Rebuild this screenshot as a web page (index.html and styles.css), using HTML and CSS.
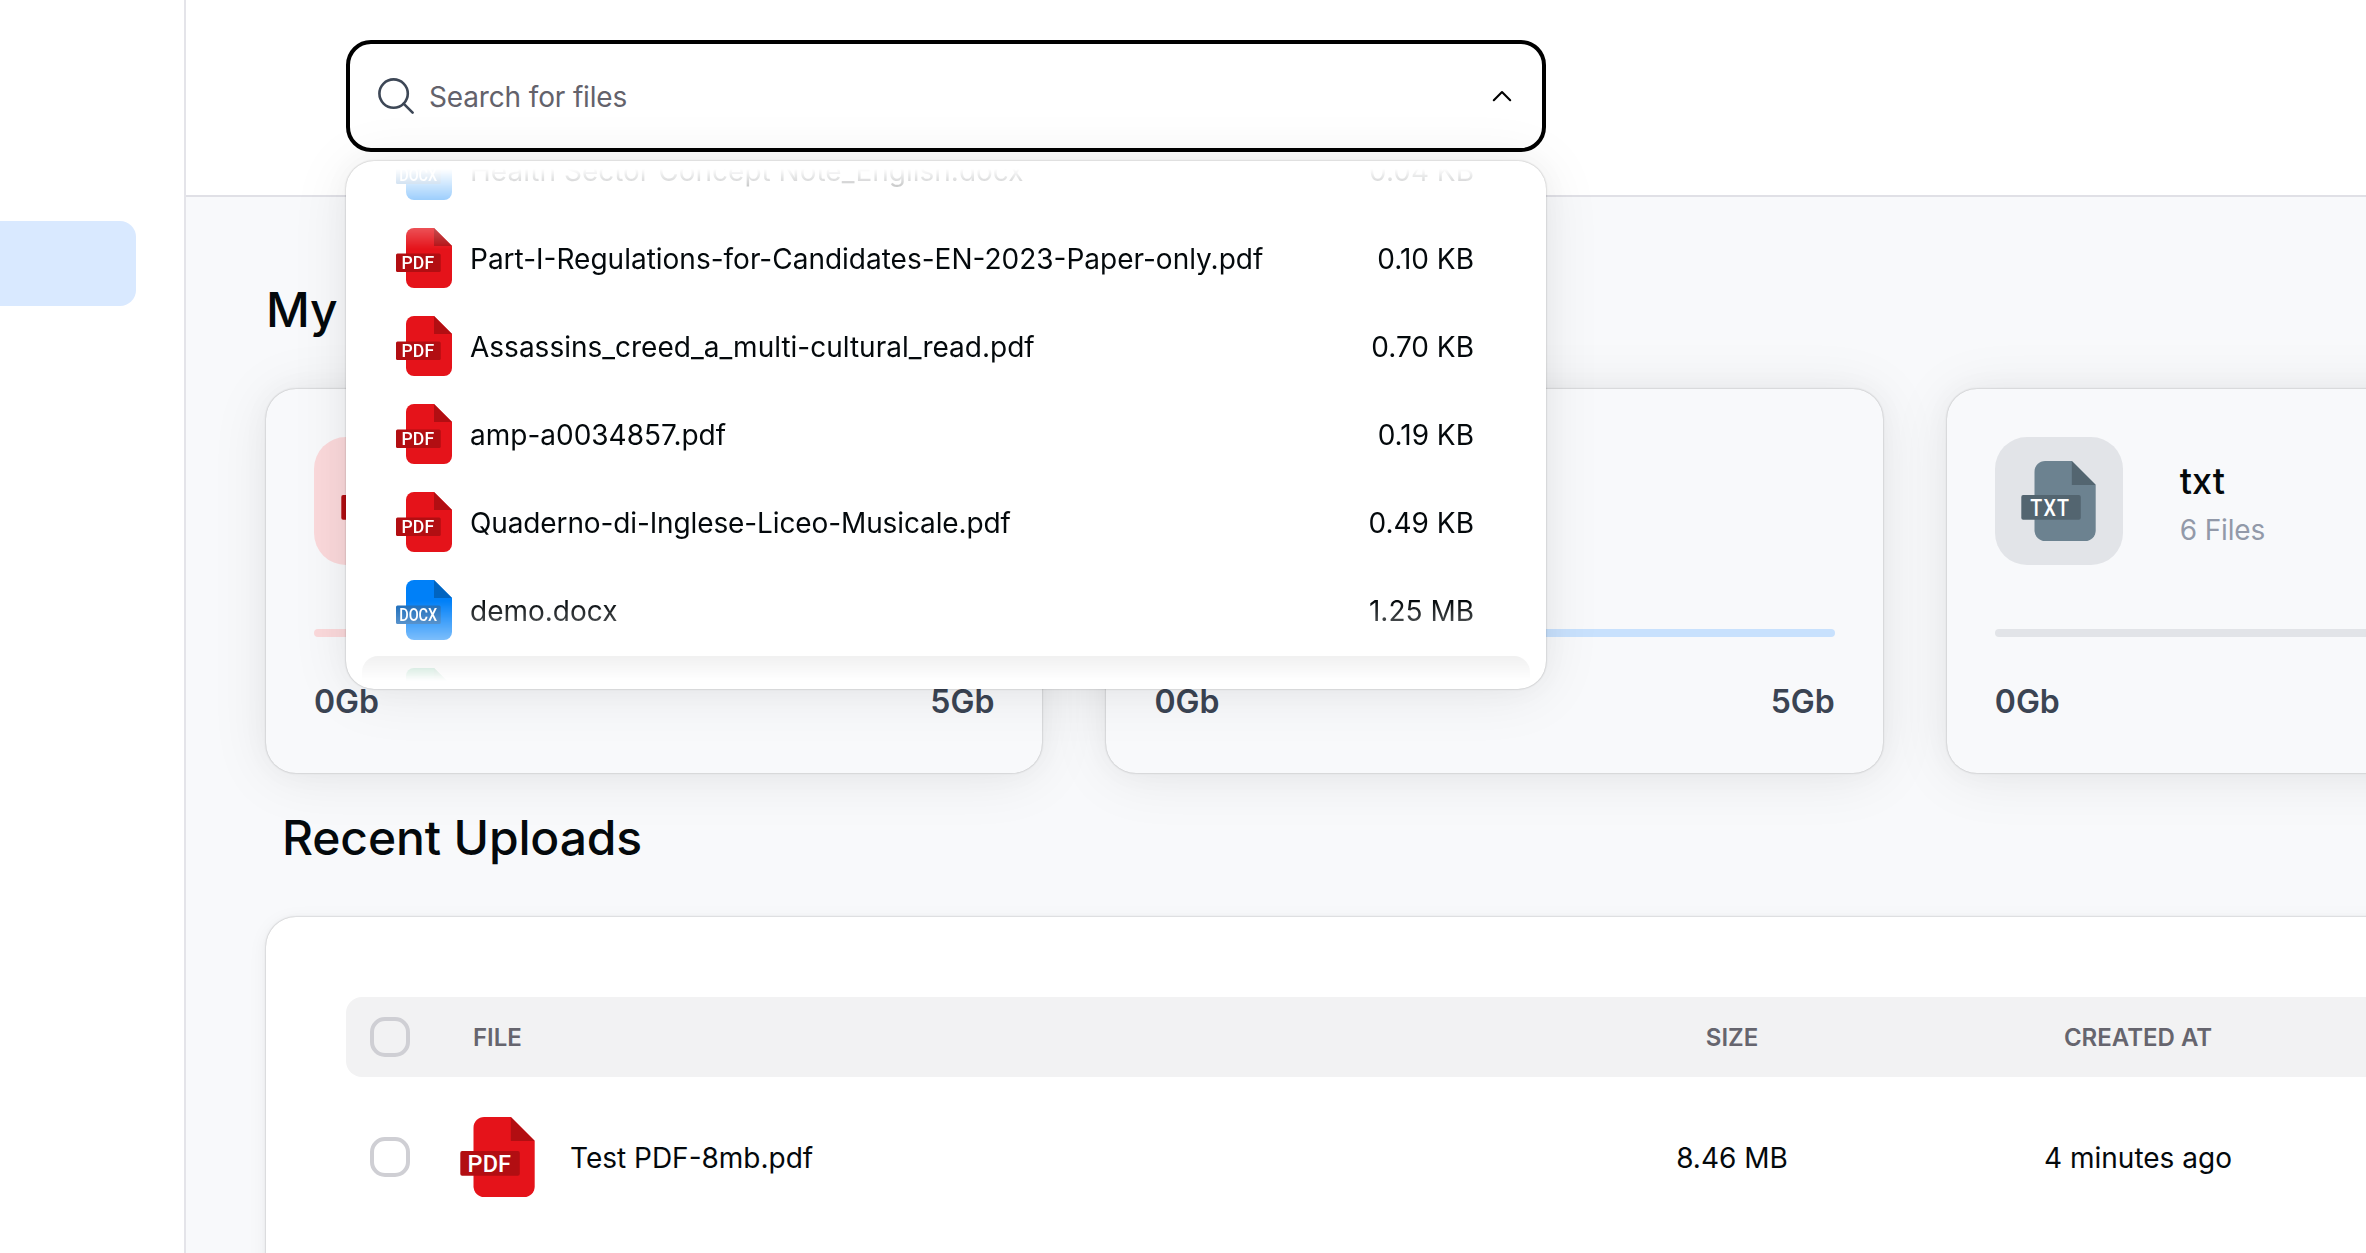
FILE: index.html
```html
<!DOCTYPE html>
<html lang="en">
<head>
<meta charset="utf-8">
<title>Files</title>
<link rel="stylesheet" href="styles.css">
</head>
<body>
<svg class="defs" aria-hidden="true">
  <symbol id="page" viewBox="0 0 56 60">
    <path class="sheet" d="M18 0H38L56 18V52a8 8 0 0 1-8 8H18a8 8 0 0 1-8-8V8a8 8 0 0 1 8-8Z"/>
    <path class="fold" d="M38 0L56 18H38Z"/>
    <rect class="band" x="0" y="25.5" width="44.7" height="18.6" rx="1.5"/>
  </symbol>
</svg>
<div class="app">
  <aside class="sidebar"><div class="nav-active"></div></aside>
  <div class="content">
    <header class="topbar">
      <div class="search">
        <div class="search-field">
          <svg class="search-icon" viewBox="0 0 36 36"><circle cx="15.6" cy="15.6" r="14.2"/><path d="M25.6 25.6L34.6 34.6"/></svg>
          <span class="placeholder">Search for files</span>
          <svg class="chevron" viewBox="0 0 20 12"><path d="M1.8 10.2L10 2L18.2 10.2"/></svg>
        </div>
        <div class="dropdown">
          <ul class="results">
            <li class="result"><svg class="file-icon blue" viewBox="0 0 56 60"><use href="#page"/><text class="ext docx" x="3.2" y="41.2" textLength="38" lengthAdjust="spacingAndGlyphs">DOCX</text></svg><span class="name">Health Sector Concept Note_English.docx</span><span>0.04 KB</span></li>
            <li class="result"><svg class="file-icon red" viewBox="0 0 56 60"><use href="#page"/><text class="ext" x="5.6" y="41.2" textLength="32.5" lengthAdjust="spacing">PDF</text></svg><span class="name">Part-I-Regulations-for-Candidates-EN-2023-Paper-only.pdf</span><span>0.10 KB</span></li>
            <li class="result"><svg class="file-icon red" viewBox="0 0 56 60"><use href="#page"/><text class="ext" x="5.6" y="41.2" textLength="32.5" lengthAdjust="spacing">PDF</text></svg><span class="name">Assassins_creed_a_multi-cultural_read.pdf</span><span>0.70 KB</span></li>
            <li class="result"><svg class="file-icon red" viewBox="0 0 56 60"><use href="#page"/><text class="ext" x="5.6" y="41.2" textLength="32.5" lengthAdjust="spacing">PDF</text></svg><span class="name">amp-a0034857.pdf</span><span>0.19 KB</span></li>
            <li class="result"><svg class="file-icon red" viewBox="0 0 56 60"><use href="#page"/><text class="ext" x="5.6" y="41.2" textLength="32.5" lengthAdjust="spacing">PDF</text></svg><span class="name tight">Quaderno-di-Inglese-Liceo-Musicale.pdf</span><span>0.49 KB</span></li>
            <li class="result"><svg class="file-icon blue" viewBox="0 0 56 60"><use href="#page"/><text class="ext docx" x="3.2" y="41.2" textLength="38" lengthAdjust="spacingAndGlyphs">DOCX</text></svg><span class="name">demo.docx</span><span>1.25 MB</span></li>
            <li class="result hovered"><svg class="file-icon green" viewBox="0 0 56 60"><use href="#page"/></svg></li>
          </ul>
        </div>
      </div>
    </header>
    <main class="main">
      <h1 class="title">My</h1>
      <div class="cards">
        <section class="card tone-red">
          <div class="card-head"><div class="tile"><svg class="file-icon large red" viewBox="0 0 56 60"><use href="#page"/></svg></div></div>
          <div class="bar"></div>
          <div class="range"><span>0Gb</span><span>5Gb</span></div>
        </section>
        <section class="card tone-blue">
          <div class="card-head"><div class="tile"><svg class="file-icon large blue" viewBox="0 0 56 60"><use href="#page"/></svg></div></div>
          <div class="bar"></div>
          <div class="range"><span>0Gb</span><span>5Gb</span></div>
        </section>
        <section class="card tone-gray">
          <div class="card-head">
            <div class="tile"><svg class="file-icon large slate" viewBox="0 0 56 60"><use href="#page"/><text class="ext" x="6.9" y="41" textLength="29" lengthAdjust="spacingAndGlyphs"><tspan>T</tspan><tspan dx="1">X</tspan><tspan dx="1">T</tspan></text></svg></div>
            <div><div class="kind">txt</div><div class="count">6 Files</div></div>
          </div>
          <div class="bar"></div>
          <div class="range"><span>0Gb</span></div>
        </section>
      </div>
      <h2 class="title recent">Recent Uploads</h2>
      <section class="table">
        <div class="row head"><span class="check"></span><span class="col-file">FILE</span><span class="mid">SIZE</span><span class="mid">CREATED AT</span></div>
        <div class="row"><span class="check"></span><span class="file"><svg class="file-icon large red" viewBox="0 0 56 60"><use href="#page"/><text class="ext" x="5.6" y="41.2" textLength="32.5" lengthAdjust="spacing">PDF</text></svg><span class="cell">Test PDF-8mb.pdf</span></span><span class="mid cell">8.46 MB</span><span class="mid cell">4 minutes ago</span></div>
      </section>
    </main>
  </div>
</div>
</body>
</html>
```
FILE: styles.css
```css
* { box-sizing: border-box; }
body {
  margin: 0;
  font-family: Inter, "Liberation Sans", sans-serif;
  font-size: 28px;
  font-weight: 420;
  color: #04090c;
  background: #fff;
}
.defs { position: absolute; width: 0; height: 0; }
.app { display: flex; width: 100%; height: 1253px; overflow: hidden; }
.sidebar { flex: none; width: 186px; padding-top: 221px; border-right: 2px solid #e4e4e9; }
.nav-active { width: 136px; height: 85px; border-radius: 0 16px 16px 0; background: #d9e9ff; }
.content { flex: 1; min-width: 0; display: flex; flex-direction: column; }
.topbar { flex: none; height: 197px; padding: 40px 0 0 160px; border-bottom: 2px solid #e0e0e6; }

.search { position: relative; z-index: 2; width: 1200px; }
.search-field {
  display: flex;
  align-items: center;
  height: 112px;
  padding: 0 30px 0 28px;
  border: 4px solid #000;
  border-radius: 25px;
}
.search-icon { width: 36px; height: 36px; fill: none; stroke: #3d4756; stroke-width: 2.6; stroke-linecap: round; }
.placeholder { flex: 1; margin-left: 15px; padding-top: 1px; color: #63626b; letter-spacing: -.15px; }
.chevron { width: 20px; height: 12px; fill: none; stroke: #000; stroke-width: 2.1; stroke-linecap: round; stroke-linejoin: round; }

.dropdown {
  position: absolute;
  top: 121px;
  left: 0;
  width: 1200px;
  height: 528px;
  padding: 8px;
  border-radius: 28px;
  background: #fff;
  box-shadow: 0 0 30px rgba(0,0,0,.03), 0 4px 60px rgba(0,0,0,.08), 0 0 2px rgba(0,0,0,.3);
}
.results {
  display: flex;
  flex-direction: column;
  gap: 4px;
  height: 512px;
  margin: 0;
  padding: 0 8px;
  list-style: none;
  overflow: hidden;
  -webkit-mask-image: linear-gradient(transparent, #000 80px, #000 calc(100% - 80px), transparent);
  mask-image: linear-gradient(transparent, #000 80px, #000 calc(100% - 80px), transparent);
}
.result {
  flex: none;
  display: flex;
  align-items: center;
  height: 84px;
  padding: 0 56px 0 34px;
  border-radius: 16px;
}
.result:first-child { margin-top: -41px; }
.result span { padding-top: 2px; }
.result.hovered { background: #d0d0d1; }
.name { flex: 1; margin-left: 18px; }
.result .tight { letter-spacing: -.12px; }

.file-icon { flex: none; display: block; width: 56px; height: 60px; }
.file-icon.large { width: 75px; height: 80px; }
.sheet { fill: var(--sheet); }
.fold { fill: var(--fold); }
.band { fill: var(--band); }
.ext { fill: #fff; font: 500 17.6px Roboto, sans-serif; }
.ext.docx { font-size: 18px; }
.red { --sheet: #e5131a; --fold: #b20e12; --band: #b20e12; }
.blue { --sheet: #0080f8; --fold: #0064c0; --band: #1467b8; }
.slate { --sheet: #6c8290; --fold: #536570; --band: #536570; }
.green { --sheet: #1c8f58; --fold: #1c7a4c; --band: #10693c; }

.main { flex: 1; padding: 81px 0 0 80px; background: #f8f9fb; overflow: hidden; }
.title { margin: 0; font-size: 48px; line-height: 64px; font-weight: 540; letter-spacing: -.15px; }
.recent { margin-top: 33px; padding-left: 16px; }
.cards { display: grid; grid-template-columns: repeat(3, 776.4px); gap: 64px; margin-top: 47px; }
.card {
  height: 384px;
  padding: 48px;
  border-radius: 30px;
  background: #f8f9fb;
  box-shadow: 0 0 30px rgba(0,0,0,.03), 0 4px 60px rgba(0,0,0,.08), 0 0 2px rgba(0,0,0,.3);
}
.card-head { display: flex; align-items: center; gap: 57px; height: 128px; }
.tile {
  display: flex;
  align-items: center;
  justify-content: center;
  width: 128px;
  height: 128px;
  border-radius: 32px;
  background: var(--tone);
}
.bar { height: 8px; margin-top: 64px; border-radius: 4px; background: var(--tone); }
.range { display: flex; justify-content: space-between; margin-top: 41px; font-size: 32px; line-height: 48px; font-weight: 560; color: #3b4453; }
.tone-red { --tone: #fbd9db; }
.tone-blue { --tone: #c8e1fd; }
.tone-gray { --tone: #e2e4e8; }
.kind { font-size: 36px; line-height: 56px; font-weight: 460; }
.count { padding-top: 1px; line-height: 40px; color: #9299a9; letter-spacing: -.15px; }

.table {
  width: 2400px;
  height: 700px;
  margin-top: 47px;
  padding: 80px;
  border-radius: 30px;
  background: #fff;
  box-shadow: 0 0 10px rgba(0,0,0,.02), 0 4px 20px rgba(0,0,0,.06), 0 0 2px rgba(0,0,0,.3);
}
.row {
  display: grid;
  grid-template-columns: 90px 1069px 406px 406px;
  align-items: center;
  height: 160px;
  padding-left: 24px;
}
.row.head { height: 80px; border-radius: 16px; background: #f2f2f3; font-size: 24px; font-weight: 620; color: #66656e; }
.check { width: 40px; height: 40px; border: 4px solid #cfcfd4; border-radius: 15px; }
.col-file { padding-left: 13px; }
.file { display: flex; align-items: center; gap: 35px; }
.cell { padding-top: 2px; }
.mid { text-align: center; }
```
